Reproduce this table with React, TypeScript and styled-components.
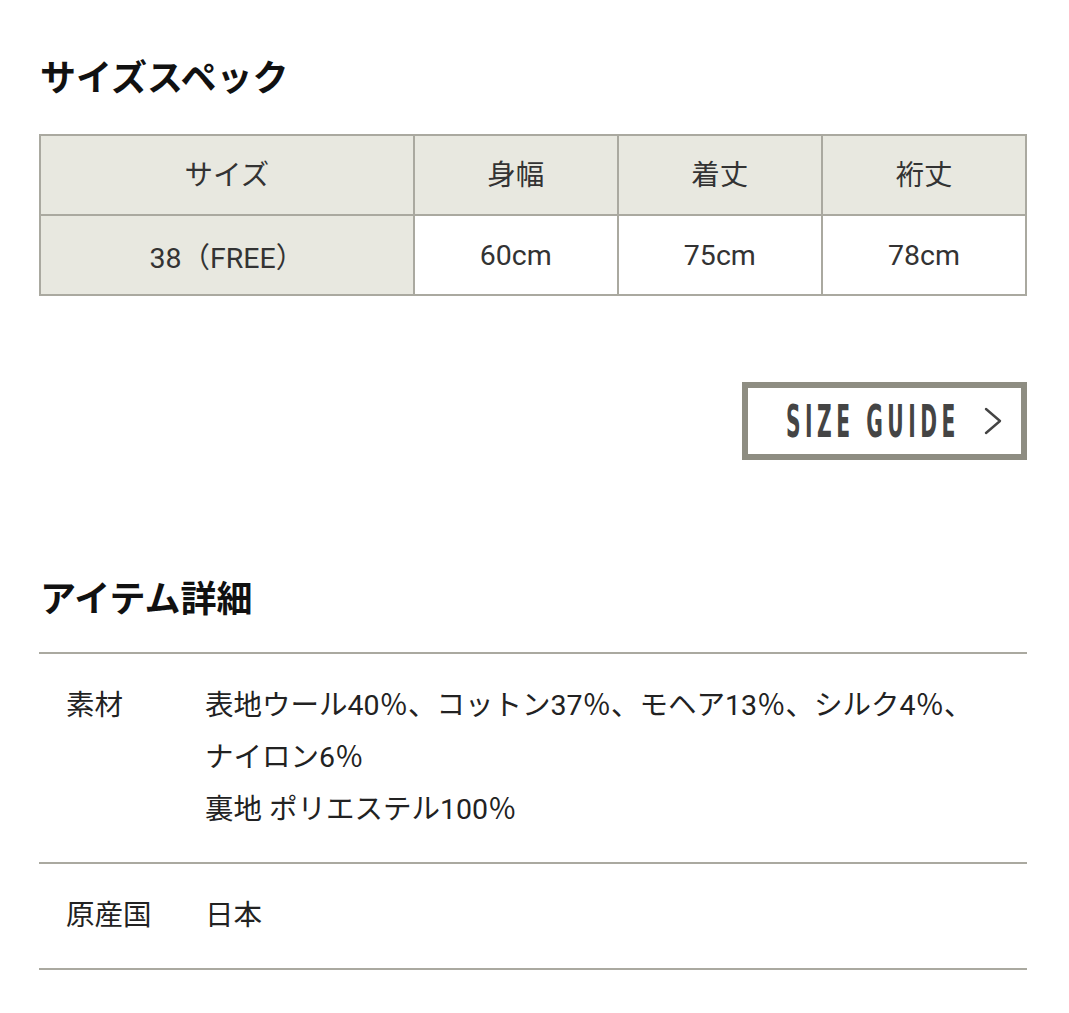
import React from "react";
import styled, { createGlobalStyle } from "styled-components";

const GlobalStyle = createGlobalStyle`
  html, body {
    margin: 0;
    padding: 0;
    background: #fff;
  }
  body {
    font-family: Roboto, "Noto Sans CJK JP", sans-serif;
    color: #222;
  }
`;

const Page = styled.div`
  padding: 53px 42px 40px 39px;
`;

const Heading = styled.h2`
  margin: 0;
  font-size: 36px;
  font-weight: 700;
  line-height: 52px;
  color: #111;
  padding-left: 1px;
`;

const SpecTable = styled.table`
  width: 100%;
  margin-top: 29px;
  border-collapse: collapse;
  table-layout: fixed;
`;

const Cell = styled.td<{ $shaded?: boolean; $head?: boolean }>`
  height: ${(p) => (p.$head ? "72px" : "78px")};
  padding: 0 0 ${(p) => (p.$head ? "6px" : "0")};
  border: 2px solid #aaa9a0;
  background: ${(p) => (p.$shaded ? "#e8e8e0" : "#fff")};
  text-align: center;
  vertical-align: middle;
  font-size: 28.5px;
  color: #333;
`;

const GuideRow = styled.div`
  display: flex;
  justify-content: flex-end;
  margin-top: 86px;
`;

const GuideButton = styled.a`
  display: flex;
  align-items: center;
  box-sizing: border-box;
  width: 285px;
  height: 78px;
  padding-left: 38px;
  border: 6px solid #8e8d82;
  color: #444;
  text-decoration: none;
`;

/* tall condensed lettering: half-size type stretched vertically */
const GuideLabel = styled.span`
  display: inline-block;
  font-family: "DejaVu Sans Condensed", "DejaVu Sans", sans-serif;
  font-weight: 700;
  font-size: 22.5px;
  line-height: 24px;
  letter-spacing: 4.5px;
  white-space: nowrap;
  transform: scaleY(2);
  transform-origin: center;
`;

const Chevron = styled.svg`
  width: 18px;
  height: 30px;
  margin-left: 24px;
`;

const DetailSection = styled.section`
  margin-top: 114px;
`;

const DetailList = styled.dl`
  margin: 26px 0 0;
  border-top: 2px solid #aaa9a0;
`;

const DetailRow = styled.div`
  display: grid;
  grid-template-columns: 139px 1fr;
  padding: 26px 0 26px 27px;
  border-bottom: 2px solid #aaa9a0;
  font-size: 28.5px;
  line-height: 52px;
`;

const Term = styled.dt`
  margin: 0;
  color: #222;
`;

const Desc = styled.dd`
  margin: 0;
  color: #222;
`;

const sizes = [
  { label: "38（FREE）", width: "60cm", length: "75cm", sleeve: "78cm" },
];

export default function App() {
  return (
    <>
      <GlobalStyle />
      <Page>
        <Heading>サイズスペック</Heading>
        <SpecTable>
          <colgroup>
            <col style={{ width: "37.9%" }} />
            <col />
            <col />
            <col />
          </colgroup>
          <tbody>
            <tr>
              <Cell $shaded $head>サイズ</Cell>
              <Cell $shaded $head>身幅</Cell>
              <Cell $shaded $head>着丈</Cell>
              <Cell $shaded $head>裄丈</Cell>
            </tr>
            {sizes.map((s) => (
              <tr key={s.label}>
                <Cell $shaded>{s.label}</Cell>
                <Cell>{s.width}</Cell>
                <Cell>{s.length}</Cell>
                <Cell>{s.sleeve}</Cell>
              </tr>
            ))}
          </tbody>
        </SpecTable>

        <GuideRow>
          <GuideButton href="#">
            <GuideLabel>SIZE GUIDE</GuideLabel>
            <Chevron viewBox="0 0 18 30" fill="none">
              <path
                d="M2 3 L16 15 L2 27"
                stroke="#444"
                strokeWidth="2.4"
                strokeLinecap="round"
                strokeLinejoin="round"
              />
            </Chevron>
          </GuideButton>
        </GuideRow>

        <DetailSection>
          <Heading>アイテム詳細</Heading>
          <DetailList>
            <DetailRow>
              <Term>素材</Term>
              <Desc>
                表地ウール40％、コットン37％、モヘア13％、シルク4％、
                <br />
                ナイロン6％
                <br />
                裏地 ポリエステル100％
              </Desc>
            </DetailRow>
            <DetailRow>
              <Term>原産国</Term>
              <Desc>日本</Desc>
            </DetailRow>
          </DetailList>
        </DetailSection>
      </Page>
    </>
  );
}
